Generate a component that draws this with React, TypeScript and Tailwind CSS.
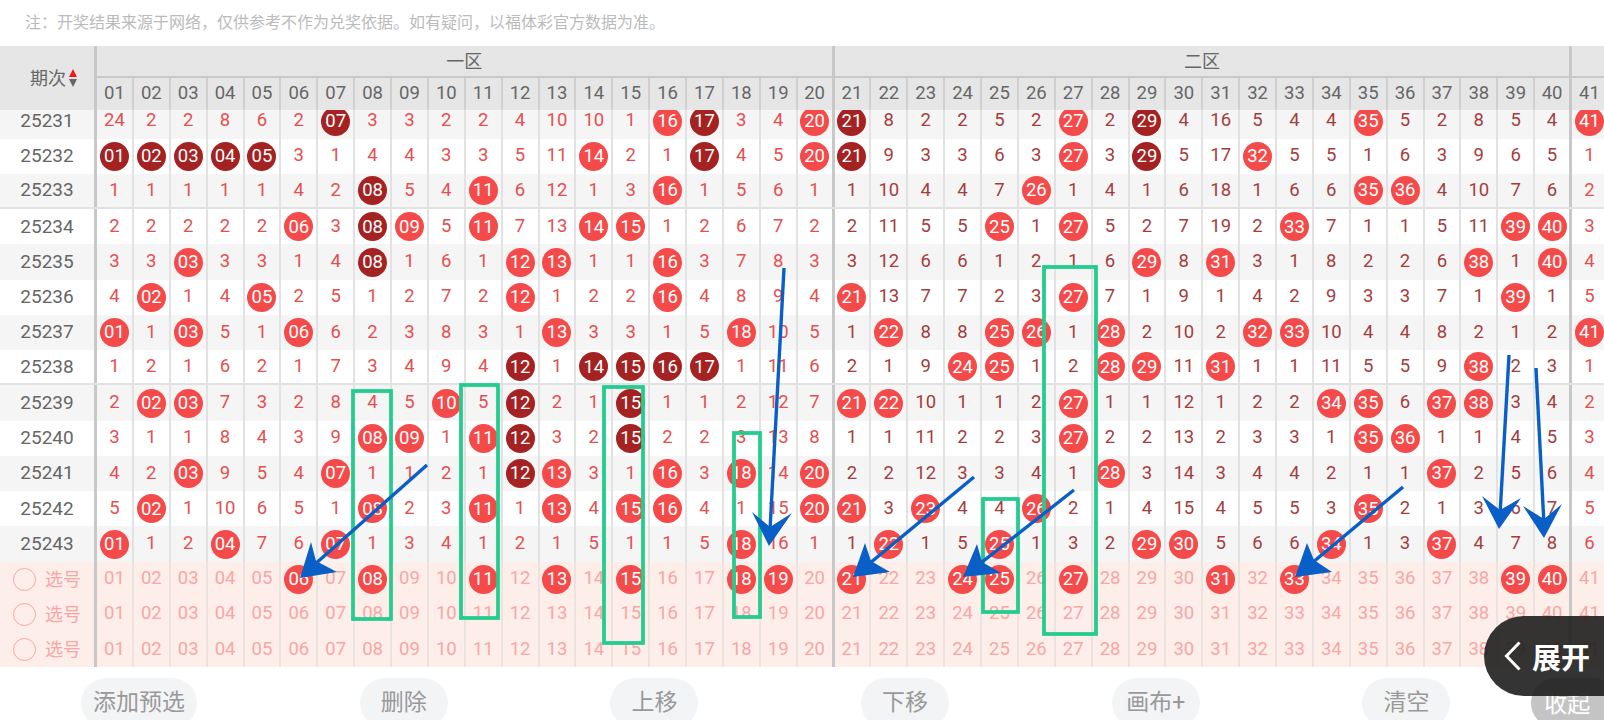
const rows: [string, string][] = [
  ["25231", "24 2 2 8 6 2 D 3 3 2 2 4 10 10 1 L D 3 4 L D 8 2 2 5 2 L 2 D 4 16 5 4 4 L 5 2 8 5 4 L"],
  ["25232", "D D D D D 3 1 4 4 3 3 5 11 L 2 1 D 4 5 L D 9 3 3 6 3 L 3 D 5 17 L 5 5 1 6 3 9 6 5 1"],
  ["25233", "1 1 1 1 1 4 2 D 5 4 L 6 12 1 3 L 1 5 6 1 1 10 4 4 7 L 1 4 1 6 18 1 6 6 L L 4 10 7 6 2"],
  ["25234", "2 2 2 2 2 L 3 D L 5 L 7 13 L L 1 2 6 7 2 2 11 5 5 L 1 L 5 2 7 19 2 L 7 1 1 5 11 L L 3"],
  ["25235", "3 3 L 3 3 1 4 D 1 6 1 L L 1 1 L 3 7 8 3 3 12 6 6 1 2 1 6 L 8 L 3 1 8 2 2 6 L 1 L 4"],
  ["25236", "4 L 1 4 L 2 5 1 2 7 2 L 1 2 2 L 4 8 9 4 L 13 7 7 2 3 L 7 1 9 1 4 2 9 3 3 7 1 L 1 5"],
  ["25237", "L 1 L 5 1 L 6 2 3 8 3 1 L 3 3 1 5 L 10 5 1 L 8 8 L L 1 L 2 10 2 L L 10 4 4 8 2 1 2 L"],
  ["25238", "1 2 1 6 2 1 7 3 4 9 4 D 1 D D D D 1 11 6 2 1 9 L L 1 2 L L 11 L 1 1 11 5 5 9 L 2 3 1"],
  ["25239", "2 L L 7 3 2 8 4 5 L 5 D 2 1 D 1 1 2 12 7 L L 10 1 1 2 L 1 1 12 1 2 2 L L 6 L L 3 4 2"],
  ["25240", "3 1 1 8 4 3 9 L L 1 L D 3 2 D 2 2 3 13 8 1 1 11 2 2 3 L 2 2 13 2 3 3 1 L L 1 1 4 5 3"],
  ["25241", "4 2 L 9 5 4 L 1 1 2 1 D L 3 1 L 3 L 14 L 2 2 12 3 3 4 1 L 3 14 3 4 4 2 1 1 L 2 5 6 4"],
  ["25242", "5 L 1 10 6 5 1 L 2 3 L 1 L 4 L L 4 1 15 L L 3 L 4 4 L 2 1 4 15 4 5 5 3 L 2 1 3 6 7 5"],
  ["25243", "L 1 2 L 7 6 L 1 3 4 1 2 1 5 1 1 5 L 16 1 1 L 1 5 L 1 3 2 L L 5 6 6 L 1 3 L 4 7 8 6"],
]

const picked = [6, 8, 11, 13, 15, 18, 19, 21, 24, 25, 27, 31, 33, 39, 40]
const cols = Array.from({ length: 41 }, (_, i) => i + 1)
const pad = (n: number) => String(n).padStart(2, "0")

const boxes = [
  [353, 391, 38, 228],
  [461, 385, 37, 233],
  [604, 387, 39, 256],
  [734, 433, 26, 184],
  [983, 499, 35, 113],
  [1044, 267, 52, 367],
]

const arrows = [
  { from: "427,465", to: "305,573", head: "300,578 311,542 316,561 337,572" },
  { from: "784,268", to: "770,530", head: "769,546 752,512 770,527 792,513" },
  { from: "974,477", to: "858,573", head: "853,577 865,543 871,561 890,572" },
  { from: "1074,490", to: "968,573", head: "963,577 977,544 982,562 1001,573" },
  { from: "1403,487", to: "1300,573", head: "1295,577 1307,543 1314,560 1332,572" },
  { from: "1509,355", to: "1500,515", head: "1499,529 1482,496 1500,510 1521,498" },
  { from: "1536,368", to: "1544,525", head: "1544,538 1523,506 1544,519 1562,504" },
]

function cellBorder(col: number, line: string) {
  if (col === 20 || col === 40) return "border-r-[3px] border-[#c8c8c8]"
  return line
}

function Ball({ n, dark }: { n: number; dark?: boolean }) {
  return (
    <div
      className={
        "flex h-[29px] w-[29px] items-center justify-center rounded-full text-[18.5px] leading-none text-white " +
        (dark ? "bg-[#a52222]" : "bg-[#f54a4a]")
      }
    >
      {pad(n)}
    </div>
  )
}

function DataRow({ no, data, index }: { no: string; data: string; index: number }) {
  const values = data.split(" ")
  return (
    <div
      className={
        "flex h-[35.25px] " +
        (index % 2 === 0 ? "bg-[#f5f5f5] " : "bg-white ") +
        (index === 2 || index === 7 ? "border-b-2 border-[#e2e2e2]" : "")
      }
    >
      <div className="flex w-[97px] shrink-0 items-center justify-center border-r-[3px] border-[#c8c8c8] text-[19px] text-[#666]">
        {no}
      </div>
      {cols.map((c) => {
        const v = values[c - 1]
        return (
          <div
            key={c}
            className={
              "flex w-[36.88px] shrink-0 items-center justify-center border-r-2 text-[18.5px] " +
              cellBorder(c, "border-[#e2e2e2]") +
              (c > 20 && c < 41 ? " text-[#a53d3d]" : " text-[#e54f4f]")
            }
          >
            {v === "L" && <Ball n={c} />}
            {v === "D" && <Ball n={c} dark />}
            {v !== "L" && v !== "D" && v}
          </div>
        )
      })}
    </div>
  )
}

function PickRow({ balls }: { balls: number[] }) {
  return (
    <div className="flex h-[35.1px] bg-[#fdeee9]">
      <div className="flex w-[97px] shrink-0 items-center gap-[9px] border-r-[3px] border-[#c8c8c8] pl-[13px] text-[18px] text-[#f8a6a6]">
        <span className="h-[23px] w-[23px] shrink-0 rounded-full border-[1.5px] border-[#f8a6a6]" />
        选号
      </div>
      {cols.map((c) => (
        <div
          key={c}
          className={
            "flex w-[36.88px] shrink-0 items-center justify-center border-r-2 text-[18.5px] text-[#f8a6a6] " +
            cellBorder(c, "border-[#ebe3df]")
          }
        >
          {balls.includes(c) ? <Ball n={c} /> : pad(c)}
        </div>
      ))}
    </div>
  )
}

function Pill({ label, wide }: { label: string; wide?: boolean }) {
  return (
    <div
      className={
        "flex h-[50px] shrink-0 items-center justify-center rounded-[25px] bg-[#f3f4f6] text-[23px] text-[#999] " +
        (wide ? "w-[116px]" : "w-[88px]")
      }
    >
      {label}
    </div>
  )
}

export default function App() {
  return (
    <div className="relative h-[720px] w-[1604px] overflow-hidden bg-white font-['Roboto','Noto_Sans_CJK_SC',sans-serif]">
      <div className="flex h-[46px] items-center pl-[25px] text-[16px] text-[#bbb]">
        注：开奖结果来源于网络，仅供参考不作为兑奖依据。如有疑问，以福体彩官方数据为准。
      </div>

      {/* Header */}
      <div className="relative z-10 flex h-[64px] bg-[#e6e6e6]">
        <div className="flex w-[97px] shrink-0 items-center gap-[3px] border-r-[3px] border-[#c8c8c8] pl-[30px] text-[18px] text-[#666]">
          <span className="whitespace-nowrap">期次</span>
          <div className="flex flex-col gap-[2px]">
            <span className="h-0 w-0 border-x-[4.5px] border-b-[8px] border-x-transparent border-b-[#f01818]" />
            <span className="h-0 w-0 border-x-[4.5px] border-t-[8px] border-x-transparent border-t-[#666]" />
          </div>
        </div>
        <div className="flex flex-col">
          <div className="flex h-[32px] border-b-2 border-[#c8c8c8] text-[18px] text-[#666]">
            <div className="flex w-[737.6px] items-center justify-center border-r-[3px] border-[#c8c8c8]">一区</div>
            <div className="flex w-[737.6px] items-center justify-center border-r-[3px] border-[#c8c8c8]">二区</div>
          </div>
          <div className="flex h-[32px] text-[18.5px] text-[#666]">
            {cols.map((c) => (
              <div
                key={c}
                className={
                  "flex w-[36.88px] shrink-0 items-center justify-center border-r-2 " +
                  cellBorder(c, "border-[#cfcfcf]")
                }
              >
                {pad(c)}
              </div>
            ))}
          </div>
        </div>
      </div>

      {/* Scrolled body */}
      <div className="h-[557px] overflow-hidden">
        <div className="-mt-[6.6px]">
          {rows.map(([no, data], i) => (
            <DataRow key={no} no={no} data={data} index={i} />
          ))}
          <PickRow balls={picked} />
          <PickRow balls={[]} />
          <PickRow balls={[]} />
        </div>
      </div>

      {/* Buttons */}
      <div className="mt-[11px] flex gap-[162.7px] pl-[81px]">
        <Pill label="添加预选" wide />
        <Pill label="删除" />
        <Pill label="上移" />
        <Pill label="下移" />
        <Pill label="画布+" />
        <Pill label="清空" />
        <div className="-ml-[82px] flex h-[50px] w-[88px] shrink-0 items-center justify-center rounded-[25px] bg-[#c4c4c4] pr-[16px] pt-[4px] text-[23px] text-white">
          收起
        </div>
      </div>

      {/* Hand drawn marks */}
      <svg className="pointer-events-none absolute left-0 top-0 z-20" width="1604" height="720" viewBox="0 0 1604 720">
        {boxes.map(([x, y, w, h]) => (
          <rect key={x} x={x} y={y} width={w} height={h} fill="none" stroke="#25cc90" strokeWidth="3.8" />
        ))}
        {arrows.map((a) => (
          <g key={a.from} fill="#0a5fc6" stroke="#0a5fc6">
            <polyline points={`${a.from} ${a.to}`} fill="none" strokeWidth="3.4" />
            <polygon points={a.head} stroke="none" />
          </g>
        ))}
      </svg>

      <div className="absolute right-0 top-[616px] z-30 flex h-[80px] w-[120px] items-center gap-[10px] rounded-l-[40px] bg-[#1e1e1e]/90 pl-[20px] text-[29px] font-bold text-white">
        <svg width="18" height="30" viewBox="0 0 18 30" fill="none" stroke="white" strokeWidth="3" className="shrink-0">
          <path d="M15.5 1.5 L2.5 15 L15.5 28.5" />
        </svg>
        <span className="mt-[7px] whitespace-nowrap">展开</span>
      </div>
    </div>
  )
}
